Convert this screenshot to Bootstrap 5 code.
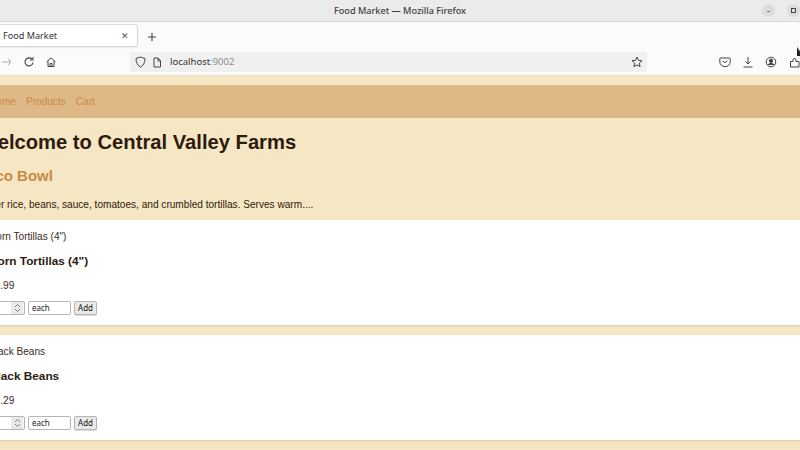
<!DOCTYPE html>
<html lang="en"><head><meta charset="utf-8"><title>Food Market</title>
<link href="https://cdn.jsdelivr.net/npm/bootstrap@5.3.0/dist/css/bootstrap.min.css" rel="stylesheet">
<style>
html,body{height:450px;overflow:hidden;background:#f5e6c4;font-family:"Liberation Sans",Arial,sans-serif;color:#2e1a0e}
.chrome-ui{font-family:"Noto Sans",Roboto,sans-serif}
.titlebar{height:22px;background:#ebebeb;border-bottom:1px solid #d8d8d8;font-size:9.150px;font-weight:500;color:#3d3d3d;position:relative}
.winbtn{width:13px;height:13px;border-radius:50%;background:#dcdcdc;font-size:7px;line-height:13px;text-align:center;color:#444}
.winctl{position:absolute;right:0;top:4px;gap:12px}
.tabstrip{height:27px;background:#fbfbfb;padding-top:2px}
.tabitem{width:138px;height:23px;background:#fff;border:1px solid #d9d9d9;border-left:0;border-radius:0 4px 4px 0;font-size:9.100px;color:#333;padding:0 8px 0 3px;box-shadow:0 1px 2px rgba(0,0,0,.08)}
.tabclose{font-size:9px;color:#555}
.newtab{margin-left:8px;color:#444;width:12px}
.toolbar{height:26px;background:#fbfbfb;position:relative}
.navicons{width:130px;gap:10px;padding-left:1px}
.urlbar{width:517px;height:20px;background:#f0f0f0;padding:0 4px 0 5px;font-size:9.500px;color:#333;gap:6px}
.urltext{margin-left:2px}
.urlport{color:#8a8a8a}
.rightbtns{margin-left:72px;gap:11px;flex:none}
.cursorhint{position:absolute;right:0;top:-2px;width:3px;height:9px;background:#222;clip-path:polygon(0 0,100% 50%,100% 100%,0 100%)}
.pageview{margin-left:-21px;width:840px;border-top:1px solid #e8e0cc;padding-top:9px}
.topnav{background:#deb887;height:33px;padding:0 0 0 10px;gap:10px;font-size:10.100px}
.topnav a{color:#cb8a4c;text-decoration:none}
.hero h1{font-size:20.200px;font-weight:700;margin:12px 0 0;line-height:24.500px;color:#2e1a0e}
.hero h2{font-size:15px;font-weight:700;margin:12.500px 0 0;line-height:18.500px;color:#c98a42}
.hero p{font-size:10.100px;margin:12.500px 0 0;line-height:13px;padding-bottom:9px;color:#2e1a0e}
.prodcard{background:#fff;height:105px;padding:10px 0 0 10px;margin-bottom:10px;box-shadow:0 1px 2px rgba(120,90,40,.2);font-size:10.100px;color:#3c2a1e}
.prodcard h3{font-size:11.800px;font-weight:700;margin:11px 0 0;line-height:15px;color:#2e1a0e}
.prodcard p{margin:0;line-height:13px}
.prodprice{margin-top:10px!important}
.buyrow{margin-top:9px;gap:3px}
.qtybox,.unitbox{height:14px;border:1px solid #b5b5b5;border-radius:2px;background:#fff;font-size:8px;color:#222;font-family:"Noto Sans",sans-serif}
.qtybox{width:36px;justify-content:flex-end;padding-right:1px}
.unitbox{width:43px;padding:0 3px}
.spin{width:12px;height:12px;background:#e9e9e9;border-radius:1px}
.addbtn{height:14px;width:23px;padding:0;border:1px solid #b5b5b5;border-radius:2px;background:#e9e9e9;font:400 8px/12px "Noto Sans",sans-serif;color:#111;box-shadow:0 1px 1px rgba(0,0,0,.15)}
</style></head><body>
<div class="chrome-ui">
<div class="titlebar d-flex align-items-center justify-content-center">Food Market — Mozilla Firefox
  <div class="winctl d-flex"><span class="winbtn">–</span><span class="winbtn d-flex align-items-center justify-content-center"><svg width="5" height="5" viewBox="0 0 5 5" fill="none" stroke="#444" stroke-width="1"><rect x=".5" y=".5" width="4" height="4"/></svg></span></div>
</div>
<div class="tabstrip d-flex align-items-start">
  <div class="tabitem d-flex align-items-center justify-content-between"><span>Food Market</span><span class="tabclose">✕</span></div>
  <svg class="newtab align-self-center" viewBox="0 0 12 12" height="12" fill="none" stroke="#444" stroke-width="1.100"><path d="M6 2v8M2 6h8"/></svg>
</div>
<div class="toolbar d-flex align-items-center">
  <div class="navicons d-flex align-items-center">
    <svg width="12" height="12" viewBox="0 0 12 12" fill="none" stroke="#aaa" stroke-width="1"><path d="M1 6h9M7 3l3 3-3 3"/></svg>
    <svg width="12" height="12" viewBox="0 0 12 12" fill="none" stroke="#444" stroke-width="1.100"><path d="M10 6.500A4 4 0 1 1 9 3.200"/><path d="M10 1v3H7"/></svg>
    <svg width="12" height="12" viewBox="0 0 12 12" fill="none" stroke="#444" stroke-width="1"><path d="M1.500 6 6 1.800 10.500 6M3 5v5.500h6V5M5 10.500V7.500h2v3"/></svg>
  </div>
  <div class="urlbar d-flex align-items-center">
    <svg width="11" height="12" viewBox="0 0 11 12" fill="none" stroke="#444" stroke-width="1"><path d="M5.500 1 10 2.500c0 4-1.500 7-4.500 8.500C2.500 9.500 1 6.500 1 2.500z"/></svg>
    <svg width="10" height="11" viewBox="0 0 10 11" fill="none" stroke="#444" stroke-width="1"><path d="M2 1h4l2.500 2.500V10H2zM6 1v3h2.500"/></svg>
    <span class="urltext">localhost<span class="urlport">:9002</span></span>
    <svg class="ms-auto" width="12" height="12" viewBox="0 0 12 12" fill="none" stroke="#444" stroke-width="1"><path d="m6 1 1.500 3.300 3.500.4-2.600 2.400.7 3.500L6 8.900l-3.100 1.700.7-3.500L1 4.700l3.500-.4z"/></svg>
  </div>
  <div class="rightbtns d-flex align-items-center">
    <svg width="12" height="12" viewBox="0 0 12 12" fill="none" stroke="#444" stroke-width="1"><path d="M1.500 2h9q.7 0 .7.7v3a5.200 5 0 0 1-10.400 0v-3q0-.7.7-.7zM3.800 4.800 6 6.800l2.200-2"/></svg>
    <svg width="12" height="12" viewBox="0 0 12 12" fill="none" stroke="#444" stroke-width="1"><path d="M6 1v7M3.500 5.500 6 8l2.500-2.500M1.500 11h9"/></svg>
    <svg width="12" height="12" viewBox="0 0 12 12" fill="none" stroke="#444" stroke-width="1"><circle cx="6" cy="6" r="4.800"/><circle cx="6" cy="4.800" r="1.700" fill="#444"/><path d="M3 9c.5-2 5.500-2 6 0" fill="#444"/></svg>
    <svg width="12" height="12" viewBox="0 0 12 12" fill="none" stroke="#444" stroke-width="1"><path d="M2.500 11V5.500H5V4a1.500 1.500 0 0 1 3 0v1.500h3V11z"/></svg>
  </div>
  <span class="cursorhint"></span>
</div>
</div>
<div class="pageview">
  <nav class="topnav d-flex align-items-center"><a href="#">Home</a><a href="#">Products</a><a href="#">Cart</a></nav>
  <section class="hero">
    <h1>Welcome to Central Valley Farms</h1>
    <h2>Taco Bowl</h2>
    <p>Layer rice, beans, sauce, tomatoes, and crumbled tortillas. Serves warm....</p>
  </section>
  <article class="prodcard">
    <p>Corn Tortillas (4")</p>
    <h3>Corn Tortillas (4")</h3>
    <p class="prodprice">$2.99</p>
    <div class="buyrow d-flex align-items-center">
      <div class="qtybox d-flex align-items-center"><span class="spin d-flex align-items-center justify-content-center"><svg width="7" height="10" viewBox="0 0 7 10" fill="none" stroke="#666" stroke-width=".8"><path d="m1 4 2.500-2.500L6 4M1 6l2.500 2.500L6 6"/></svg></span></div>
      <div class="unitbox d-flex align-items-center">each</div>
      <button class="addbtn" type="button">Add</button>
    </div>
  </article>
  <article class="prodcard">
    <p>Black Beans</p>
    <h3>Black Beans</h3>
    <p class="prodprice">$1.29</p>
    <div class="buyrow d-flex align-items-center">
      <div class="qtybox d-flex align-items-center"><span class="spin d-flex align-items-center justify-content-center"><svg width="7" height="10" viewBox="0 0 7 10" fill="none" stroke="#666" stroke-width=".8"><path d="m1 4 2.500-2.500L6 4M1 6l2.500 2.500L6 6"/></svg></span></div>
      <div class="unitbox d-flex align-items-center">each</div>
      <button class="addbtn" type="button">Add</button>
    </div>
  </article>
</div>
</body></html>
